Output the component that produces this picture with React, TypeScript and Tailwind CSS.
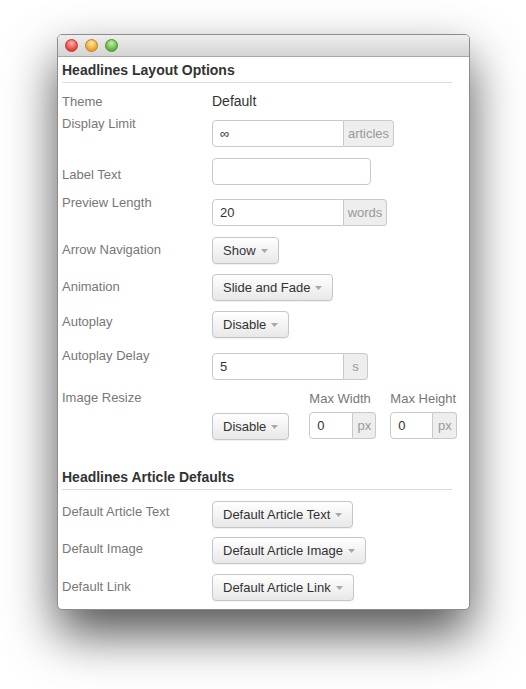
import React from "react";

const font = { fontFamily: '"Liberation Sans", Arial, sans-serif' };

function Caret() {
  return (
    <svg width="7" height="4" viewBox="0 0 7 4" className="ml-[5px] mt-[1px]">
      <path d="M0 0 L7 0 L3.5 4 Z" fill="#a8a8a8" />
    </svg>
  );
}

function Btn({ label, mt = 0 }: { label: string; mt?: number }) {
  return (
    <div
      className="flex h-[27px] items-center rounded-[4px] border border-[#c6c6c6] bg-gradient-to-b from-[#ffffff] to-[#e8e8e8] px-[10px] text-[13px] text-[#333] shadow-[0_1px_1px_rgba(0,0,0,0.06)]"
      style={mt ? { marginTop: mt } : undefined}
    >
      <span>{label}</span>
      <Caret />
    </div>
  );
}

function Input({
  value,
  w,
  addon,
  aw,
}: {
  value: string;
  w: number;
  addon?: string;
  aw?: number;
}) {
  return (
    <div className="flex h-[27px]">
      <div
        className={
          "flex items-center border border-[#c9c9c9] bg-white px-[7px] text-[13px] text-[#333] " +
          (addon ? "rounded-l-[4px]" : "rounded-[4px]")
        }
        style={{ width: w }}
      >
        {value}
      </div>
      {addon && (
        <div
          className="flex items-center justify-center rounded-r-[4px] border border-l-0 border-[#c9c9c9] bg-[#eeeeee] text-[13px] text-[#999]"
          style={{ width: aw }}
        >
          {addon}
        </div>
      )}
    </div>
  );
}

function Label({ text, mt }: { text: string; mt: number }) {
  return (
    <div
      className="w-[150px] shrink-0 text-[13px] leading-[16px] text-[#777]"
      style={{ marginTop: mt }}
    >
      {text}
    </div>
  );
}

function Heading({ text, mt }: { text: string; mt: number }) {
  return (
    <>
      <div
        className="h-[20px] text-[14px] font-bold leading-[20px] text-[#333]"
        style={{ marginTop: mt }}
      >
        {text}
      </div>
      <div className="mt-[2px] h-px bg-[#dcdcdc]" />
    </>
  );
}

function Light({ from, to, border }: { from: string; to: string; border: string }) {
  return (
    <div
      className="h-[13px] w-[13px] rounded-full border"
      style={{
        borderColor: border,
        background: `radial-gradient(circle at 50% 30%, ${from} 0%, ${to} 70%)`,
      }}
    />
  );
}

export default function App() {
  return (
    <div className="min-h-screen bg-white pl-[57px] pt-[34px]" style={font}>
      <div className="w-[413px] overflow-hidden rounded-[5px] border border-[#8c8c8c] bg-white shadow-[0_24px_50px_rgba(0,0,0,0.68)]">
        <div className="flex h-[22px] items-center gap-[7px] border-b border-[#a8a8a8] bg-gradient-to-b from-[#eeeeee] to-[#d4d4d4] pl-[7px]">
          <Light from="#ffb3ad" to="#e4413a" border="#b5372f" />
          <Light from="#ffe6a8" to="#e9a324" border="#b98222" />
          <Light from="#c7f0a8" to="#5cb53a" border="#4a8f2f" />
        </div>
        <div className="pb-[8px] pl-[4px] pr-[17px]">
          <Heading text="Headlines Layout Options" mt={3} />

          <div className="mt-[9px] flex h-[18px] items-center">
            <Label text="Theme" mt={1} />
            <div className="text-[14px] leading-[18px] text-[#333]">Default</div>
          </div>

          <div className="mt-[6px] flex items-start">
            <Label text="Display Limit" mt={0} />
            <div className="mt-[4px]">
              <Input value="∞" w={132} addon="articles" aw={50} />
            </div>
          </div>

          <div className="mt-[11px] flex items-start">
            <Label text="Label Text" mt={9} />
            <Input value="" w={159} />
          </div>

          <div className="mt-[10px] flex items-start">
            <Label text="Preview Length" mt={0} />
            <div className="mt-[4px]">
              <Input value="20" w={132} addon="words" aw={43} />
            </div>
          </div>

          <div className="mt-[11px] flex items-start">
            <Label text="Arrow Navigation" mt={5} />
            <Btn label="Show" />
          </div>

          <div className="mt-[10px] flex items-start">
            <Label text="Animation" mt={5} />
            <Btn label="Slide and Fade" />
          </div>

          <div className="mt-[10px] flex items-start">
            <Label text="Autoplay" mt={3} />
            <Btn label="Disable" />
          </div>

          <div className="mt-[10px] flex items-start">
            <Label text="Autoplay Delay" mt={0} />
            <div className="mt-[5px]">
              <Input value="5" w={132} addon="s" aw={24} />
            </div>
          </div>

          <div className="mt-[10px] flex items-start">
            <Label text="Image Resize" mt={0} />
            <Btn label="Disable" mt={23} />
            <div className="ml-[20px] flex flex-col">
              <div className="mt-[1px] text-[13px] leading-[16px] text-[#777]">Max Width</div>
              <div className="mt-[5px]">
                <Input value="0" w={44} addon="px" aw={23} />
              </div>
            </div>
            <div className="ml-[14px] flex flex-col">
              <div className="mt-[1px] text-[13px] leading-[16px] text-[#777]">Max Height</div>
              <div className="mt-[5px]">
                <Input value="0" w={43} addon="px" aw={24} />
              </div>
            </div>
          </div>

          <Heading text="Headlines Article Defaults" mt={27} />

          <div className="mt-[11px] flex items-start">
            <Label text="Default Article Text" mt={3} />
            <Btn label="Default Article Text" />
          </div>

          <div className="mt-[9px] flex items-start">
            <Label text="Default Image" mt={4} />
            <Btn label="Default Article Image" />
          </div>

          <div className="mt-[10px] flex items-start">
            <Label text="Default Link" mt={5} />
            <Btn label="Default Article Link" />
          </div>
        </div>
      </div>
    </div>
  );
}
